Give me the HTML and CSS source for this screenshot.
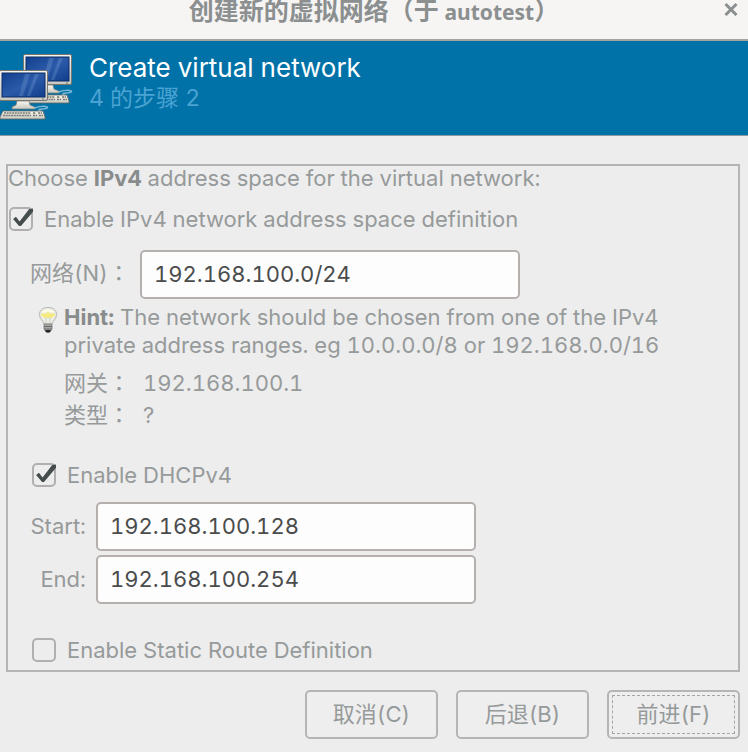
FILE: index.html
```html
<!DOCTYPE html>
<html lang="zh-CN">
<head>
<meta charset="utf-8">
<title>创建新的虚拟网络</title>
<link rel="stylesheet" href="styles.css">
</head>
<body>
<header class="titlebar">
  <h1 class="window-title">创建新的虚拟网络（于 <span class="host">autotest</span>）</h1>
  <button class="close" type="button" aria-label="关闭">
    <svg width="14" height="14" viewBox="0 0 14 14"><path d="M1.500 2 12.500 13M12.500 2 1.500 13" stroke="#8b8f8f" stroke-width="3" fill="none"/></svg>
  </button>
</header>
<section class="banner">
  <svg class="banner-icon" width="73" height="68" viewBox="0 0 73 68">
    <defs>
      <linearGradient id="screen" x1="0" y1="0" x2="1" y2="1"><stop offset="0" stop-color="#123f8d"/><stop offset=".5" stop-color="#2a5aa8"/><stop offset="1" stop-color="#123f8d"/></linearGradient>
      <linearGradient id="shell" x1="0" y1="0" x2="0" y2="1"><stop offset="0" stop-color="#f7f6f2"/><stop offset="1" stop-color="#c9c8c1"/></linearGradient>
      <g id="computer">
        <path d="M18 31h12l1 4 5 2v2H13v-2l4-2z" fill="url(#shell)" stroke="#77776f" stroke-width=".7"/>
        <path d="M36 38c4-2 10-2 12-1s-2 2-5 2-5 2-1 2" fill="none" stroke="#7bb8d4" stroke-width="1.500"/>
        <rect x=".5" y=".5" width="48" height="30" rx="1.500" fill="url(#shell)" stroke="#77776f"/>
        <rect x="3" y="3" width="43" height="24" fill="url(#screen)" stroke="#0b2c66"/>
        <path d="M20 26 26 4h5l-7 22zM28 26l8-22h4L31 26z" fill="#8baede" opacity=".25"/>
        <circle cx="44" cy="29" r=".8" fill="#687060"/>
        <path d="M4 41h40l2 6v2H1v-2z" fill="url(#shell)" stroke="#66665f" stroke-width=".8"/>
        <path d="M5 43h27M4 45.500h28M34 43h3M39 43h4M34 45.500h4M40 45.500h4" stroke="#77776f" stroke-width="1.500" stroke-dasharray="2 .7"/>
      </g>
    </defs>
    <use href="#computer" x="23" y="1"/>
    <use href="#computer" x="-1" y="17"/>
  </svg>
  <div class="banner-text">
    <h2 class="banner-title">Create virtual network</h2>
    <p class="banner-step">4 的步骤 2</p>
  </div>
</section>
<form class="page">
  <div class="frame">
    <p class="intro">Choose <b>IPv4</b> address space for the virtual network:</p>
    <label class="check"><input type="checkbox" checked><span>Enable IPv4 network address space definition</span></label>
    <div class="network-row">
      <label for="network">网络(N)<span class="colon" lang="zh-TW">：</span></label>
      <input class="entry" id="network" type="text" value="192.168.100.0/24">
    </div>
    <div class="hint">
      <svg class="bulb" width="20" height="28" viewBox="0 0 20 28">
        <path d="M6 18C5 14 1.500 13 1.500 8.500 1.500 4 5 1.500 10 1.500s8.500 2.500 8.500 7c0 4.500-3.500 5.500-4.500 9.500z" fill="#eeeee8" stroke="#b4b4ae"/>
        <path d="M3 8c2-2 3 1 5-1 1-1 3-1 4 0 2 2 3-1 5 1 0 3-3 4-7 4S3 11 3 8z" fill="#f5ea80"/>
        <path d="M5 6q5-3 10 0" stroke="#fffde2" stroke-width="2" fill="none"/>
        <path d="M8 11v7M12 11v7" stroke="#d0cfc5"/>
        <path d="M6 18h8v5l-2 3H8l-2-3z" fill="#a7aaa7" stroke="#777b78" stroke-width=".8"/>
        <path d="M6 20.500h8M6 23h8" stroke="#686c69"/>
        <path d="M7 24h6l-1.500 2.500h-3z" fill="#242724"/>
      </svg>
      <div>
        <p class="hint-text"><b>Hint:</b> The network should be chosen from one of the IPv4<br>private address ranges. eg 10.0.0.0/8 or 192.168.0.0/16</p>
        <dl class="facts"><dt>网关<span class="colon" lang="zh-TW">：</span></dt><dd>192.168.100.1</dd><dt>类型<span class="colon" lang="zh-TW">：</span></dt><dd>?</dd></dl>
      </div>
    </div>
    <label class="check nested dhcp"><input type="checkbox" checked><span>Enable DHCPv4</span></label>
    <div class="range">
      <label for="start">Start:</label><input class="entry" id="start" type="text" value="192.168.100.128">
      <label for="end">End:</label><input class="entry" id="end" type="text" value="192.168.100.254">
    </div>
    <label class="check nested route"><input type="checkbox"><span>Enable Static Route Definition</span></label>
  </div>
  <div class="actions">
    <button type="button">取消(C)</button>
    <button type="button">后退(B)</button>
    <button class="default" type="button">前进(F)</button>
  </div>
</form>
</body>
</html>
```
FILE: styles.css
```css
* { box-sizing: border-box; }
body {
  margin: 0;
  background: #ededed;
  color: #969a9a;
  font: 22px/28px Inter, "Noto Sans CJK SC", sans-serif;
  font-variant-numeric: tabular-nums;
}
h1, h2, p, dl, dd { margin: 0; }
input, button { font: inherit; font-variant-numeric: tabular-nums; color: inherit; }
.colon { font-family: "Noto Sans CJK TC", sans-serif; line-height: 1; }

.titlebar {
  display: grid;
  grid-template-columns: 1fr auto 1fr;
  height: 41px;
  background: #f6f5f4;
  border-bottom: 2px solid #a8a29c;
}
.window-title {
  grid-column: 2;
  font: bold 25px/18px "Noto Sans CJK SC", sans-serif;
  color: #8b8f8f;
}
.host { font-family: "Noto Sans", sans-serif; font-size: 21px; }
.close {
  justify-self: end;
  align-self: start;
  display: flex;
  margin: 2px 10px 0 0;
  padding: 0;
  border: 0;
  background: none;
}

.banner {
  display: flex;
  gap: 16px;
  height: 95px;
  padding-top: 12px;
  background: #0072a8;
  border-bottom: 1px solid #8b9ba5;
}
.banner-text { color: #fff; }
.banner-title { font-size: 26px; font-weight: normal; line-height: 30px; }
.banner-step { font-size: 23px; line-height: 30px; color: #4ba3d3; }

.page { padding: 28px 8px 12px 6px; }
.frame { border: 2px solid #b4b4b4; padding-bottom: 8px; }
.intro { line-height: 24px; }
.intro b, .hint b { color: #888c8c; }

.check { display: flex; align-items: center; gap: 11px; height: 24px; margin: 17px 0 0 1px; }
.check.nested { margin-left: 24px; }
.check.dhcp { margin-top: 32px; }
.check.route { margin-top: 34px; }
.check input {
  appearance: none;
  width: 24px;
  height: 24px;
  margin: 0;
  border: 2px solid #b0b0b0;
  border-radius: 5px;
  position: relative;
}
.check input:checked::after {
  content: "";
  position: absolute;
  inset: -2px;
  background: #454c4c;
  clip-path: polygon(17% 50%, 29% 41%, 44% 60%, 84% 8%, 108% 5%, 108% 10%, 50% 79%, 42% 79%);
}

.entry {
  width: 380px;
  height: 49px;
  padding: 0 12px 2px;
  border: 2px solid #b5b0ae;
  border-radius: 5px;
  background: #fdfdfd;
  color: #4a4c4c;
}
.network-row { display: flex; align-items: center; margin: 19px 0 0 22px; }
.network-row label { width: 110px; line-height: 24px; padding-bottom: 4px; }

.hint { display: flex; gap: 6px; margin: 4px 0 0 30px; }
.bulb { flex: none; margin-top: 3px; }
.facts { display: grid; grid-template-columns: 79px 1fr; grid-auto-rows: 32px; line-height: 32px; margin-top: 8px; }

.range { display: grid; grid-template-columns: 78px 1fr; column-gap: 10px; row-gap: 4px; align-items: center; margin-top: 15px; }
.range label { text-align: right; padding-bottom: 2px; }

.actions { display: flex; justify-content: flex-end; gap: 18px; margin-top: 18px; }
.actions button {
  width: 133px;
  height: 49px;
  padding: 0 0 2px;
  border: 2px solid #b5b5b5;
  border-radius: 5px;
  background: #eee;
}
.actions .default { outline: 1px dashed #a5a5a5; outline-offset: -6px; }
```
